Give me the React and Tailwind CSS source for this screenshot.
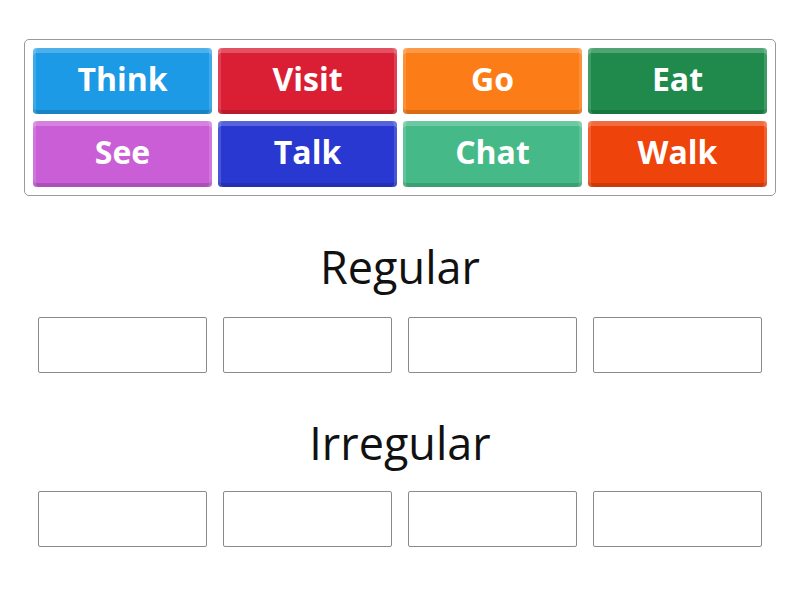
import * as React from "react";

const words = [
  { label: "Think", color: "bg-[#1c9ae6]" },
  { label: "Visit", color: "bg-[#da1f35]" },
  { label: "Go", color: "bg-[#fc7d17]" },
  { label: "Eat", color: "bg-[#1f8a4b]" },
  { label: "See", color: "bg-[#c95ed7]" },
  { label: "Talk", color: "bg-[#2838d0]" },
  { label: "Chat", color: "bg-[#45ba88]" },
  { label: "Walk", color: "bg-[#ef430c]" },
];

const Tile = ({ label, color }) => {
  return (
    <div
      className={`${color} h-[66px] rounded-[4px] flex items-center justify-center text-white font-bold text-[32px] shadow-[inset_0_5px_0_rgba(255,255,255,0.22),inset_3px_0_0_rgba(255,255,255,0.15),inset_-3px_0_0_rgba(255,255,255,0.15),inset_0_-4px_0_rgba(0,0,0,0.14)]`}
    >
      <span className="leading-none -mt-[5px]">{label}</span>
    </div>
  );
};

const DropRow = () => {
  return (
    <div className="grid grid-cols-4 gap-4 px-[38px]">
      {[0, 1, 2, 3].map((i) => (
        <div key={i} className="h-[56px] border border-[#8a8a8a] rounded-[2px] bg-white" />
      ))}
    </div>
  );
};

export default function App() {
  return (
    <div
      className="w-[800px] h-[600px] bg-white overflow-hidden"
      style={{ fontFamily: '"Open Sans", sans-serif' }}
    >
      <div className="pt-[39px] px-[24px]">
        <div className="border border-[#9a9a9a] rounded-[5px] p-2 grid grid-cols-4 gap-x-[6px] gap-y-[7px]">
          {words.map((w) => (
            <Tile key={w.label} {...w} />
          ))}
        </div>
      </div>

      <div className="text-center text-[45px] leading-none text-[#111] mt-[48px] h-[73px]">
        Regular
      </div>
      <DropRow />

      <div className="text-center text-[45px] leading-none text-[#111] mt-[47px] h-[71px]">
        Irregular
      </div>
      <DropRow />
    </div>
  );
}
